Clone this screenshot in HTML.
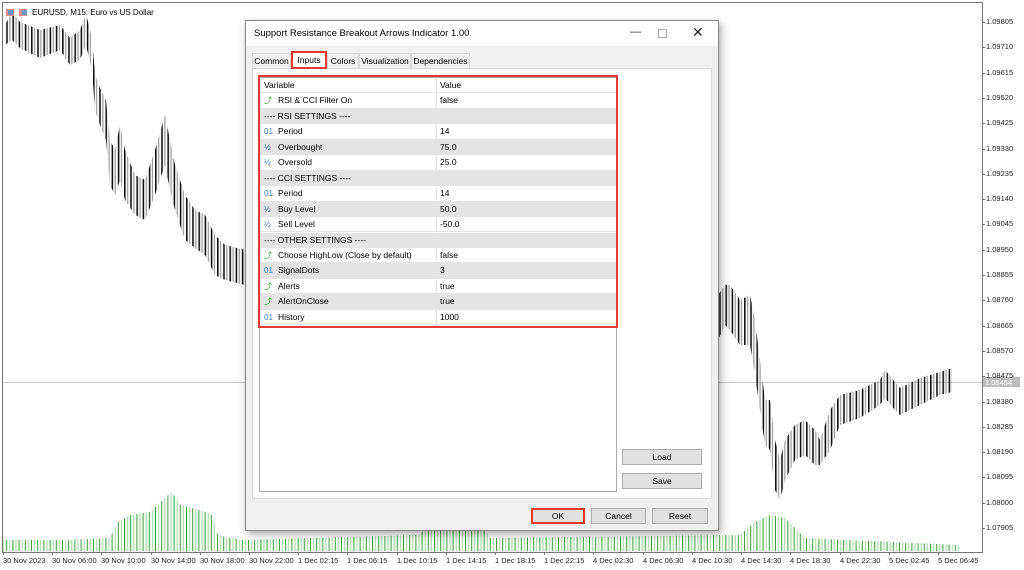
<!DOCTYPE html>
<html><head><meta charset="utf-8"><style>
*{margin:0;padding:0;box-sizing:border-box}
body{width:1024px;height:570px;overflow:hidden;background:#fff;font-family:"Liberation Sans",sans-serif;font-size:9px;color:#000;position:relative}
.a{position:absolute}
.pl{position:absolute;left:986px;font-size:7.5px;color:#222}
.tl{position:absolute;top:556px;font-size:7.5px;color:#222;white-space:nowrap}
.tk{position:absolute;width:3px;height:1px;background:#777;left:982px}
.tt{position:absolute;top:552px;width:1px;height:3px;background:#777}
#dlg{left:245px;top:20px;width:474px;height:511px;background:#f0f0f0;border:1px solid #888;box-shadow:2px 3px 8px rgba(0,0,0,.35)}
.tab{position:absolute;top:32px;height:16px;border:1px solid #d9d9d9;background:#f0f0f0;font-size:8.5px;line-height:14px;text-align:center}
.row{position:absolute;left:0;width:356px;height:15.4px;border-bottom:1px solid #e3e3e3;font-size:8.5px;line-height:15px}
.row span{position:absolute}
.row .v{left:180px}
.row .n{left:18px}
.row .h{left:4px}
.row .i{left:4px;font-size:8px;color:#3a7fc4}
.row .k{left:4px;font-size:8px;color:#2aa52a}
.g{background:#e4e4e4}
.btn{position:absolute;height:16px;background:#e1e1e1;border:1px solid #adadad;font-size:8.5px;line-height:14px;text-align:center}
</style></head><body>
<svg class="a" style="left:0;top:0" width="1024" height="570">
<defs>
<pattern id="cs" patternUnits="userSpaceOnUse" width="6.2" height="7">
<rect x="0" y="0" width="1.6" height="7" fill="#111"/><rect x="3.1" y="0" width="1.2" height="7" fill="#999"/>
</pattern>
<pattern id="vs" patternUnits="userSpaceOnUse" width="6.2" height="5">
<rect x="0" y="0" width="1" height="5" fill="#3a9a3a"/><rect x="3.1" y="0" width="1" height="5" fill="#9ad79a"/>
</pattern>
</defs>
<rect x="2.5" y="2.5" width="980" height="550" fill="none" stroke="#777"/>
<line x1="3" y1="382.5" x2="982" y2="382.5" stroke="#c8c8c8"/>
<polygon fill="url(#vs)" points="3,551 3,540 60,540 110,538 118,522 130,515 150,512 165,498 172,492 180,505 200,510 212,515 218,535 240,540 420,535 430,520 480,520 490,538 740,535 755,522 770,515 785,518 795,528 805,538 960,545 960,551"/>
<polygon fill="url(#cs)" points="5,25 12,12 20,22 40,30 60,25 70,38 80,30 86,14 92,38 95,75 100,88 106,100 110,140 115,150 120,125 125,150 135,175 145,180 155,150 165,115 170,140 175,165 185,195 195,210 205,215 215,235 225,245 245,250 245,285 225,280 215,275 205,255 195,248 185,240 175,210 170,190 165,165 155,195 145,220 135,215 125,200 120,180 115,195 110,185 106,140 100,125 95,110 92,70 86,45 80,60 70,65 60,50 40,58 20,48 12,40 5,45"/>
<polygon fill="url(#cs)" points="718,295 725,285 730,285 740,300 750,295 755,320 760,360 765,400 770,400 775,440 780,460 785,440 795,425 805,420 815,430 820,440 830,410 840,395 860,390 880,380 885,370 895,382 900,388 920,378 940,372 952,368 952,392 940,395 920,405 900,415 895,410 885,398 880,405 860,418 840,425 830,450 820,465 815,465 805,455 795,460 785,480 780,500 775,490 770,450 765,445 760,410 755,375 750,345 740,345 730,330 725,325 718,340"/>
<rect x="983" y="377" width="37" height="10" fill="#bdbdbd"/>
<text x="985" y="385" font-size="7.5" fill="#fff" font-family="Liberation Sans">1.08454</text>
<rect x="6" y="9" width="8" height="7" fill="#e88"/><rect x="8" y="10" width="5" height="5" fill="#69c"/>
<rect x="19" y="9" width="8" height="7" fill="#e88"/><rect x="22" y="10" width="5" height="5" fill="#69c"/>
<text x="32" y="15" font-size="8" font-family="Liberation Sans" fill="#000">EURUSD, M15:  Euro vs US Dollar</text>
</svg>

<div class="pl" style="top:17px">1.09805</div><div class="tk" style="top:22px"></div>
<div class="pl" style="top:42px">1.09710</div><div class="tk" style="top:47px"></div>
<div class="pl" style="top:68px">1.09615</div><div class="tk" style="top:73px"></div>
<div class="pl" style="top:93px">1.09520</div><div class="tk" style="top:98px"></div>
<div class="pl" style="top:118px">1.09425</div><div class="tk" style="top:123px"></div>
<div class="pl" style="top:144px">1.09330</div><div class="tk" style="top:149px"></div>
<div class="pl" style="top:169px">1.09235</div><div class="tk" style="top:174px"></div>
<div class="pl" style="top:194px">1.09140</div><div class="tk" style="top:199px"></div>
<div class="pl" style="top:219px">1.09045</div><div class="tk" style="top:224px"></div>
<div class="pl" style="top:245px">1.08950</div><div class="tk" style="top:250px"></div>
<div class="pl" style="top:270px">1.08855</div><div class="tk" style="top:275px"></div>
<div class="pl" style="top:295px">1.08760</div><div class="tk" style="top:300px"></div>
<div class="pl" style="top:321px">1.08665</div><div class="tk" style="top:326px"></div>
<div class="pl" style="top:346px">1.08570</div><div class="tk" style="top:351px"></div>
<div class="pl" style="top:371px">1.08475</div><div class="tk" style="top:376px"></div>
<div class="pl" style="top:397px">1.08380</div><div class="tk" style="top:402px"></div>
<div class="pl" style="top:422px">1.08285</div><div class="tk" style="top:427px"></div>
<div class="pl" style="top:447px">1.08190</div><div class="tk" style="top:452px"></div>
<div class="pl" style="top:472px">1.08095</div><div class="tk" style="top:477px"></div>
<div class="pl" style="top:498px">1.08000</div><div class="tk" style="top:503px"></div>
<div class="pl" style="top:523px">1.07905</div><div class="tk" style="top:528px"></div>

<div class="tl" style="left:3px">30 Nov 2023</div><div class="tt" style="left:3px"></div>
<div class="tl" style="left:52px">30 Nov 06:00</div><div class="tt" style="left:52px"></div>
<div class="tl" style="left:101px">30 Nov 10:00</div><div class="tt" style="left:101px"></div>
<div class="tl" style="left:151px">30 Nov 14:00</div><div class="tt" style="left:151px"></div>
<div class="tl" style="left:200px">30 Nov 18:00</div><div class="tt" style="left:200px"></div>
<div class="tl" style="left:249px">30 Nov 22:00</div><div class="tt" style="left:249px"></div>
<div class="tl" style="left:298px">1 Dec 02:15</div><div class="tt" style="left:298px"></div>
<div class="tl" style="left:347px">1 Dec 06:15</div><div class="tt" style="left:347px"></div>
<div class="tl" style="left:397px">1 Dec 10:15</div><div class="tt" style="left:397px"></div>
<div class="tl" style="left:446px">1 Dec 14:15</div><div class="tt" style="left:446px"></div>
<div class="tl" style="left:495px">1 Dec 18:15</div><div class="tt" style="left:495px"></div>
<div class="tl" style="left:544px">1 Dec 22:15</div><div class="tt" style="left:544px"></div>
<div class="tl" style="left:593px">4 Dec 02:30</div><div class="tt" style="left:593px"></div>
<div class="tl" style="left:643px">4 Dec 06:30</div><div class="tt" style="left:643px"></div>
<div class="tl" style="left:692px">4 Dec 10:30</div><div class="tt" style="left:692px"></div>
<div class="tl" style="left:741px">4 Dec 14:30</div><div class="tt" style="left:741px"></div>
<div class="tl" style="left:790px">4 Dec 18:30</div><div class="tt" style="left:790px"></div>
<div class="tl" style="left:840px">4 Dec 22:30</div><div class="tt" style="left:840px"></div>
<div class="tl" style="left:889px">5 Dec 02:45</div><div class="tt" style="left:889px"></div>
<div class="tl" style="left:938px">5 Dec 06:45</div><div class="tt" style="left:938px"></div>

<div id="dlg" class="a">
 <div class="a" style="left:0;top:0;width:472px;height:25px;background:#fff"></div>
 <div class="a" style="left:8px;top:7px;font-size:9.5px">Support Resistance Breakout Arrows Indicator 1.00</div>
 <div class="a" style="left:384px;top:5px;font-size:11px;color:#333">—</div>
 <div class="a" style="left:412px;top:8px;width:9px;height:9px;border:1px solid #aaa"></div>
 <div class="a" style="left:446px;top:3px;font-size:14px;color:#222">✕</div>
 <div class="a" style="left:6px;top:47px;width:460px;height:431px;background:#fff;border:1px solid #d9d9d9"></div>
 <div class="tab" style="left:6px;width:39px">Common</div>
 <div class="tab" style="left:45px;width:36px;top:30px;height:18px;background:#fff;border:2px solid #e53935">Inputs</div>
 <div class="tab" style="left:81px;width:32px">Colors</div>
 <div class="tab" style="left:113px;width:52px">Visualization</div>
 <div class="tab" style="left:165px;width:59px">Dependencies</div>
 <div class="a" style="left:13px;top:56px;width:358px;height:415px;background:#fff;border:1px solid #aaa"></div>
 <div class="a" style="left:14px;top:57px;width:356px;height:248px">
  <div class="row" style="top:0px"><span class="h">Variable</span><span class="v">Value</span></div>
  <div class="row" style="top:15.45px"><span class="k">⤴</span><span class="n">RSI &amp; CCI Filter On</span><span class="v">false</span></div>
  <div class="row g" style="top:30.9px"><span class="h">---- RSI SETTINGS ----</span></div>
  <div class="row" style="top:46.35px"><span class="i">01</span><span class="n">Period</span><span class="v">14</span></div>
  <div class="row g" style="top:61.8px"><span class="i">½</span><span class="n">Overbought</span><span class="v">75.0</span></div>
  <div class="row" style="top:77.25px"><span class="i">½</span><span class="n">Oversold</span><span class="v">25.0</span></div>
  <div class="row g" style="top:92.7px"><span class="h">---- CCI SETTINGS ----</span></div>
  <div class="row" style="top:108.15px"><span class="i">01</span><span class="n">Period</span><span class="v">14</span></div>
  <div class="row g" style="top:123.6px"><span class="i">½</span><span class="n">Buy Level</span><span class="v">50.0</span></div>
  <div class="row" style="top:139.05px"><span class="i">½</span><span class="n">Sell Level</span><span class="v">-50.0</span></div>
  <div class="row g" style="top:154.5px"><span class="h">---- OTHER SETTINGS ----</span></div>
  <div class="row" style="top:169.95px"><span class="k">⤴</span><span class="n">Choose HighLow (Close by default)</span><span class="v">false</span></div>
  <div class="row g" style="top:185.4px"><span class="i">01</span><span class="n">SignalDots</span><span class="v">3</span></div>
  <div class="row" style="top:200.85px"><span class="k">⤴</span><span class="n">Alerts</span><span class="v">true</span></div>
  <div class="row g" style="top:216.3px"><span class="k">⤴</span><span class="n">AlertOnClose</span><span class="v">true</span></div>
  <div class="row" style="top:231.75px"><span class="i">01</span><span class="n">History</span><span class="v">1000</span></div>
  <div class="a" style="left:176px;top:0;width:1px;height:248px;background:#e3e3e3"></div>
 </div>
 <div class="a" style="left:12px;top:54px;width:360px;height:253px;border:2px solid #e53935"></div>
 <div class="btn" style="left:376px;top:428px;width:80px">Load</div>
 <div class="btn" style="left:376px;top:452px;width:80px">Save</div>
 <div class="btn" style="left:285px;top:487px;width:54px;border:2px solid #e53935;line-height:12px">OK</div>
 <div class="btn" style="left:345px;top:487px;width:55px">Cancel</div>
 <div class="btn" style="left:406px;top:487px;width:56px">Reset</div>
</div>
</body></html>
